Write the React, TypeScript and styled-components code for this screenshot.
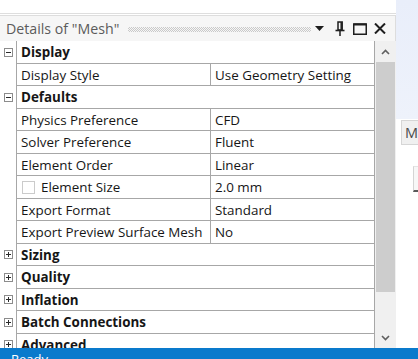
import React from "react";
import styled, { createGlobalStyle } from "styled-components";

const Global = createGlobalStyle`
  html, body { margin: 0; padding: 0; background: #ffffff; overflow: hidden; }
  body { font-family: "Open Sans", "Noto Sans", sans-serif; color: #161616; }
`;

const Screen = styled.div`
  width: 418px;
  height: 359px;
  display: flex;
  flex-direction: column;
  overflow: hidden;
`;

const Main = styled.div`
  display: flex;
  height: 348px;
  flex: none;
  overflow: hidden;
`;

const Panel = styled.div`
  width: 396px;
  flex: none;
  display: flex;
  flex-direction: column;
`;

const TopStrip = styled.div`
  height: 13px;
  flex: none;
  background: #ffffff;
  border-bottom: 1px solid #dedede;
`;

const Header = styled.div`
  height: 26px;
  margin-top: 1px;
  box-sizing: border-box;
  flex: none;
  display: flex;
  align-items: center;
  background: #f6f6f6;
  border-top: 1px solid #dddddd;
  border-right: 1px solid #dddddd;
  padding-left: 6px;
  padding-right: 9px;
`;

const Title = styled.span`
  font-size: 14.2px;
  color: #5b5b5b;
  white-space: nowrap;
`;

const Grip = styled.div`
  flex: 1;
  height: 5px;
  margin: 1px 4px 0 9px;
  background: repeating-conic-gradient(#c9c9c9 0 25%, transparent 0 50%) 0 0 / 2px 2px;
`;

const HeaderIcon = styled.svg<{ $gap?: number }>`
  display: block;
  flex: none;
  margin-left: ${(p) => p.$gap ?? 0}px;
`;

const Body = styled.div`
  flex: 1;
  display: flex;
  overflow: hidden;
`;

const GridArea = styled.div`
  width: 375px;
  flex: none;
  display: flex;
  flex-direction: column;
  &::before {
    content: "";
    display: block;
    height: 1px;
    margin-left: 16px;
    background: #a7a7a7;
  }
`;

const Row = styled.div`
  display: grid;
  grid-template-columns: 16px 195px 164px;
  height: 22.5px;
  flex: none;
`;

const Gutter = styled.div`
  display: flex;
  align-items: center;
  justify-content: center;
`;

const Toggle = styled.div<{ $open: boolean }>`
  position: relative;
  width: 9px;
  height: 9px;
  box-sizing: border-box;
  border: 1px solid #8c8c8c;
  background: #ffffff;
  &::before {
    content: "";
    position: absolute;
    left: 1px;
    right: 1px;
    top: 3px;
    height: 1px;
    background: #2a2a2a;
  }
  &::after {
    content: "";
    display: ${(p) => (p.$open ? "none" : "block")};
    position: absolute;
    top: 1px;
    bottom: 1px;
    left: 3px;
    width: 1px;
    background: #2a2a2a;
  }
`;

const Cell = styled.div<{ $category?: boolean; $value?: boolean }>`
  box-sizing: border-box;
  display: flex;
  align-items: center;
  padding: 1px 0 0 4px;
  font-size: 13.4px;
  font-weight: ${(p) => (p.$category ? 700 : 400)};
  white-space: nowrap;
  overflow: hidden;
  border-bottom: 1px solid #a7a7a7;
  border-right: 1px solid #a7a7a7;
  border-left: ${(p) => (p.$value ? "none" : "1px solid #a7a7a7")};
  grid-column: ${(p) => (p.$category ? "span 2" : "auto")};
`;

const Check = styled.span`
  width: 13px;
  height: 13px;
  box-sizing: border-box;
  border: 1px solid #cbcbcb;
  background: #fff;
  margin: 0 6px 0 1px;
  flex: none;
`;

const Scrollbar = styled.div`
  width: 21px;
  flex: none;
  display: flex;
  flex-direction: column;
  background: #f0f0f0;
`;

const ScrollButton = styled.div`
  height: 21px;
  flex: none;
  display: flex;
  align-items: center;
  justify-content: center;
`;

const Track = styled.div`
  flex: 1;
  display: flex;
  flex-direction: column;
  padding: 0 1px;
`;

const Thumb = styled.div`
  height: 230px;
  flex: none;
  background: #cdcdcd;
`;

const RightPane = styled.div`
  flex: 1;
  display: flex;
  flex-direction: column;
  background: #ffffff;
`;

const Backdrop = styled.div`
  height: 119px;
  flex: none;
  background: linear-gradient(180deg, #e9eefa 0%, #eef2fb 100%);
`;

const Tab = styled.div`
  height: 25px;
  margin-left: 5px;
  margin-top: 1px;
  box-sizing: border-box;
  flex: none;
  display: flex;
  align-items: center;
  padding-left: 3px;
  background: #f0f0f0;
  border: 1px solid #d6d6d6;
  border-right: none;
  font-size: 14.5px;
  color: #4a4a4a;
`;

const MiniBox = styled.div`
  margin: 21px 0 0 17px;
  height: 26px;
  box-sizing: border-box;
  border-left: 1px solid #d4d4d4;
  border-top: 1px solid #e4e4e4;
  border-bottom: 2px solid #5a5a5a;
  background: #f7f7f7;
`;

const StatusBar = styled.div`
  height: 11px;
  flex: none;
  background: #0a7acc;
  color: #ffffff;
  font-size: 13px;
  line-height: 16px;
  padding: 3px 0 0 11px;
  box-sizing: content-box;
  overflow: hidden;
`;

type Item =
  | { kind: "cat"; label: string; open: boolean }
  | { kind: "prop"; label: string; value: string; check?: boolean };

const items: Item[] = [
  { kind: "cat", label: "Display", open: true },
  { kind: "prop", label: "Display Style", value: "Use Geometry Setting" },
  { kind: "cat", label: "Defaults", open: true },
  { kind: "prop", label: "Physics Preference", value: "CFD" },
  { kind: "prop", label: "Solver Preference", value: "Fluent" },
  { kind: "prop", label: "Element Order", value: "Linear" },
  { kind: "prop", label: "Element Size", value: "2.0 mm", check: true },
  { kind: "prop", label: "Export Format", value: "Standard" },
  { kind: "prop", label: "Export Preview Surface Mesh", value: "No" },
  { kind: "cat", label: "Sizing", open: false },
  { kind: "cat", label: "Quality", open: false },
  { kind: "cat", label: "Inflation", open: false },
  { kind: "cat", label: "Batch Connections", open: false },
  { kind: "cat", label: "Advanced", open: false },
];

const Chevron = ({ up }: { up?: boolean }) => (
  <svg width="9" height="6" viewBox="0 0 9 6">
    <path
      d={up ? "M1 5 L4.5 1.5 L8 5" : "M1 1 L4.5 4.5 L8 1"}
      fill="none"
      stroke="#5f5f5f"
      strokeWidth="1.6"
    />
  </svg>
);

export default function App() {
  return (
    <Screen>
      <Global />
      <Main>
        <Panel>
          <TopStrip />
          <Header>
            <Title>Details of "Mesh"</Title>
            <Grip />
            <HeaderIcon width="9" height="5" viewBox="0 0 9 5">
              <path d="M0 0 H9 L4.5 5 Z" fill="#1e1e1e" />
            </HeaderIcon>
            <HeaderIcon width="10" height="15" viewBox="0 0 10 15" $gap={11}>
              <path d="M3 1 H7.2 V9 H3 Z" fill="none" stroke="#1e1e1e" strokeWidth="1.5" />
              <path d="M6.2 1 V9" stroke="#1e1e1e" strokeWidth="1.5" />
              <path d="M0.5 9.5 H9.5" stroke="#1e1e1e" strokeWidth="1.6" />
              <path d="M5 10 V15" stroke="#1e1e1e" strokeWidth="1.5" />
            </HeaderIcon>
            <HeaderIcon width="14" height="12" viewBox="0 0 14 12" $gap={8}>
              <path d="M0.75 1 H13.25 V11.25 H0.75 Z" fill="none" stroke="#1e1e1e" strokeWidth="1.5" />
              <path d="M0.75 1.5 H13.25" stroke="#1e1e1e" strokeWidth="2" />
            </HeaderIcon>
            <HeaderIcon width="12" height="11" viewBox="0 0 12 11" $gap={7}>
              <path d="M1 0.5 L11 10.5 M11 0.5 L1 10.5" stroke="#1e1e1e" strokeWidth="2" />
            </HeaderIcon>
          </Header>
          <Body>
            <GridArea>
              {items.map((it) =>
                it.kind === "cat" ? (
                  <Row key={it.label}>
                    <Gutter>
                      <Toggle $open={it.open} />
                    </Gutter>
                    <Cell $category>{it.label}</Cell>
                  </Row>
                ) : (
                  <Row key={it.label}>
                    <Gutter />
                    <Cell>
                      {it.check && <Check />}
                      {it.label}
                    </Cell>
                    <Cell $value>{it.value}</Cell>
                  </Row>
                )
              )}
            </GridArea>
            <Scrollbar>
              <ScrollButton>
                <Chevron up />
              </ScrollButton>
              <Track>
                <Thumb />
              </Track>
              <ScrollButton>
                <Chevron />
              </ScrollButton>
            </Scrollbar>
          </Body>
        </Panel>
        <RightPane>
          <Backdrop />
          <Tab>M</Tab>
          <MiniBox />
        </RightPane>
      </Main>
      <StatusBar>Ready</StatusBar>
    </Screen>
  );
}
